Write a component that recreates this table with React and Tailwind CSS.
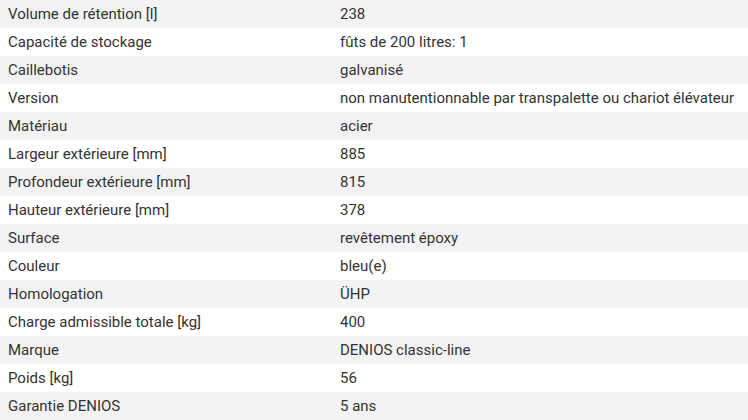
const rows = [
  ["Volume de rétention [l]", "238"],
  ["Capacité de stockage", "fûts de 200 litres: 1"],
  ["Caillebotis", "galvanisé"],
  ["Version", "non manutentionnable par transpalette ou chariot élévateur"],
  ["Matériau", "acier"],
  ["Largeur extérieure [mm]", "885"],
  ["Profondeur extérieure [mm]", "815"],
  ["Hauteur extérieure [mm]", "378"],
  ["Surface", "revêtement époxy"],
  ["Couleur", "bleu(e)"],
  ["Homologation", "ÜHP"],
  ["Charge admissible totale [kg]", "400"],
  ["Marque", "DENIOS classic-line"],
  ["Poids [kg]", "56"],
  ["Garantie DENIOS", "5 ans"],
];

export default function App() {
  return (
    <div className="w-[748px] h-[420px] bg-white overflow-hidden text-[15px] text-[#333333]" style={{ fontFamily: "Roboto, 'Liberation Sans', sans-serif" }}>
      {rows.map(([k, v], i) => (
        <div key={i} className={`flex h-[28px] items-center ${i % 2 === 0 ? "bg-[#f3f3f5]" : "bg-white"}`}>
          <div className="w-[340px] pl-[8px] whitespace-nowrap">{k}</div>
          <div className="flex-1 whitespace-nowrap">{v}</div>
        </div>
      ))}
    </div>
  );
}
